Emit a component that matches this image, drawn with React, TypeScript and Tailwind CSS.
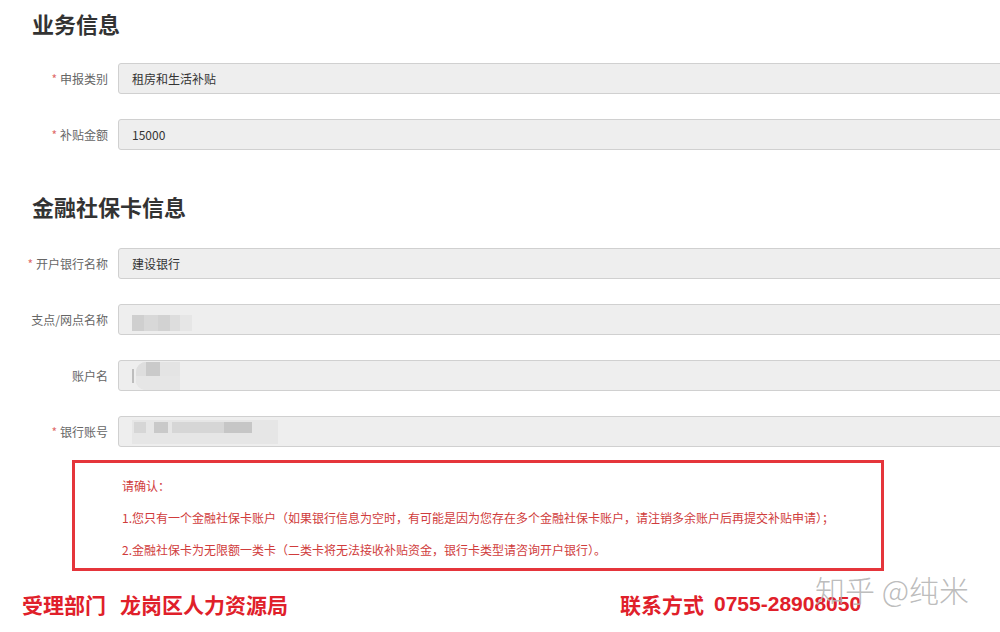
import React from 'react';

// --- TIPOS ---
type Field = {
  label: string;
  required?: boolean;
  value?: string;
  blur?: React.ReactNode;
};

const CJK = { fontFamily: '"Microsoft YaHei", "Noto Sans CJK SC", "Liberation Sans", sans-serif' };

// blocos "pixelizados" que escondem dados pessoais (em fluxo, dentro do input)
const BranchBlur = () => (
  <div className="flex h-[16px] mt-[6px]">
    <span className="w-[12px] bg-[#cfcfcf]" />
    <span className="w-[14px] bg-[#d8d8d8]" />
    <span className="w-[12px] bg-[#d2d2d2]" />
    <span className="w-[10px] bg-[#dddddd]" />
    <span className="w-[12px] bg-[#e6e6e6]" />
  </div>
);

const NameBlur = () => (
  <div className="flex items-center h-[28px]">
    <span className="w-[2px] h-[14px] bg-[#bdbdbd] mr-[2px]" />
    <div className="flex flex-col h-[28px] w-[44px] rounded-l-[10px] overflow-hidden bg-[#e0e0e0]">
      <div className="flex h-[14px]">
        <span className="w-[10px] bg-[#dedede]" />
        <span className="w-[14px] bg-[#cacaca]" />
        <span className="w-[20px] bg-[#e4e4e4]" />
      </div>
      <div className="flex-1 bg-[#e6e6e6]" />
    </div>
  </div>
);

const AccountBlur = () => (
  <div className="flex flex-col h-[24px] w-[146px] bg-[#e6e6e6]">
    <div className="flex h-[13px] pl-[2px] pt-[2px]">
      <span className="w-[12px] bg-[#d6d6d6]" />
      <span className="w-[8px]" />
      <span className="w-[14px] bg-[#c9c9c9]" />
      <span className="w-[4px]" />
      <span className="w-[52px] bg-[#d6d6d6]" />
      <span className="w-[28px] bg-[#c6c6c6]" />
    </div>
  </div>
);

const BUSINESS: Field[] = [
  { label: '申报类别', required: true, value: '租房和生活补贴' },
  { label: '补贴金额', required: true, value: '15000' },
];

const CARD: Field[] = [
  { label: '开户银行名称', required: true, value: '建设银行' },
  { label: '支点/网点名称', blur: <BranchBlur /> },
  { label: '账户名', blur: <NameBlur /> },
  { label: '银行账号', required: true, blur: <AccountBlur /> },
];

const Row = ({ f }: { f: Field }) => (
  <div className="flex items-center h-[31px]">
    <div className="w-[108px] shrink-0 text-right text-[12px] text-[#666]">
      {f.required && <span className="text-[#e06c6c] mr-[3px]">*</span>}
      {f.label}
    </div>
    <div className="ml-[10px] h-[31px] w-[900px] shrink-0 rounded-[3px] border border-[#d0d0d0] bg-[#eeeeee] pl-[13px] flex items-center text-[12px] text-[#333]">
      {f.value}
      {f.blur}
    </div>
  </div>
);

const Heading = ({ children }: { children: React.ReactNode }) => (
  <h2 className="pl-[32px] h-[28px] leading-[28px] text-[22px] font-bold text-[#333]">{children}</h2>
);

export default function App() {
  return (
    <div className="relative w-[1000px] h-[632px] overflow-hidden bg-white" style={CJK}>
      <div className="pt-[9px]">
        <Heading>业务信息</Heading>

        <div className="mt-[26px] flex flex-col gap-[25px]">
          {BUSINESS.map((f) => <Row key={f.label} f={f} />)}
        </div>

        <div className="mt-[42px]">
          <Heading>金融社保卡信息</Heading>
        </div>

        <div className="mt-[28px] flex flex-col gap-[25px]">
          {CARD.map((f) => <Row key={f.label} f={f} />)}
        </div>

        {/* aviso de confirmação */}
        <div className="ml-[72px] mt-[13px] w-[812px] h-[111px] border-[3px] border-[#e5353b] pl-[47px] pt-[14px] text-[12px] text-[#d03c3c]">
          <p className="leading-[18px]">请确认：</p>
          <p className="mt-[14px] leading-[18px]">1.您只有一个金融社保卡账户（如果银行信息为空时，有可能是因为您存在多个金融社保卡账户，请注销多余账户后再提交补贴申请）；</p>
          <p className="mt-[14px] leading-[18px]">2.金融社保卡为无限额一类卡（二类卡将无法接收补贴资金，银行卡类型请咨询开户银行）。</p>
        </div>

        {/* rodapé */}
        <div className="mt-[20px] flex items-center text-[21px] font-bold text-[#e0202a] leading-[26px]">
          <div className="pl-[22px] flex gap-[14px]">
            <span>受理部门</span>
            <span>龙岗区人力资源局</span>
          </div>
          <div className="ml-[332px] flex gap-[10px]">
            <span>联系方式</span>
            <span style={{ fontFamily: '"Liberation Sans", sans-serif' }}>0755-28908050</span>
          </div>
        </div>
      </div>

      {/* marca d'água */}
      <div className="absolute left-[815px] top-[569px] text-[30px] leading-[40px] text-[#b4b4b4]/90 font-light">
        知乎 @纯米
      </div>
    </div>
  );
}
